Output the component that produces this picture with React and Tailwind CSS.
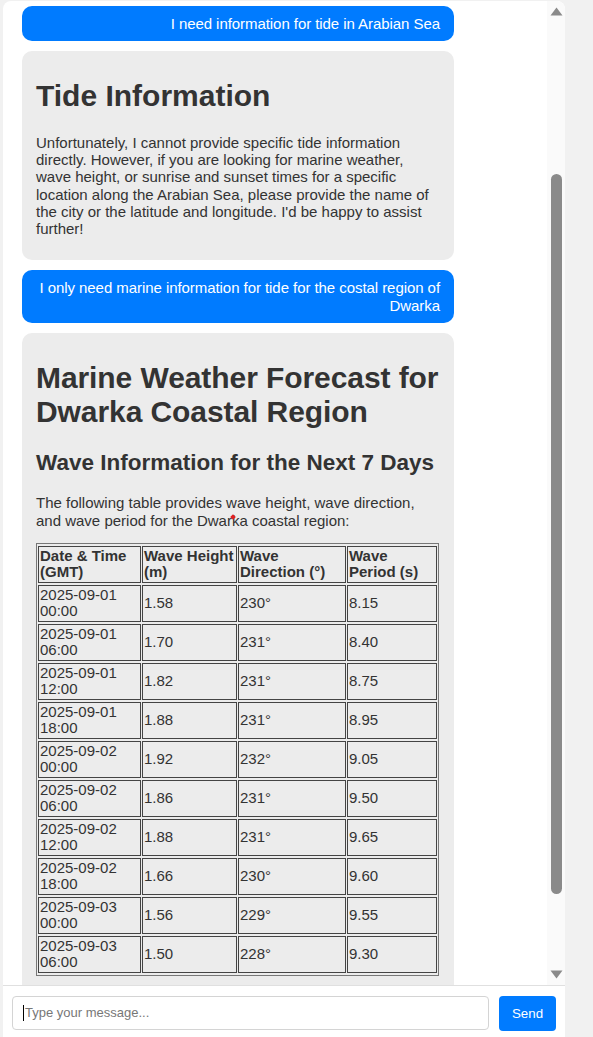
import React from "react";

const rows = [
  ["2025-09-01", "00:00", "1.58", "230°", "8.15"],
  ["2025-09-01", "06:00", "1.70", "231°", "8.40"],
  ["2025-09-01", "12:00", "1.82", "231°", "8.75"],
  ["2025-09-01", "18:00", "1.88", "231°", "8.95"],
  ["2025-09-02", "00:00", "1.92", "232°", "9.05"],
  ["2025-09-02", "06:00", "1.86", "231°", "9.50"],
  ["2025-09-02", "12:00", "1.88", "231°", "9.65"],
  ["2025-09-02", "18:00", "1.66", "230°", "9.60"],
  ["2025-09-03", "00:00", "1.56", "229°", "9.55"],
  ["2025-09-03", "06:00", "1.50", "228°", "9.30"],
];

function UserMsg({ children }) {
  return (
    <div className="w-[432px] ml-[19px] mb-[10px] bg-[#007bff] text-white rounded-[10px] px-[14px] py-[9px] text-right text-[15px] leading-[17.25px] tracking-[-0.06px]">
      {children}
    </div>
  );
}

function BotMsg({ children }) {
  return (
    <div className="w-[432px] ml-[19px] mb-[10px] bg-[#ececec] text-[#333] rounded-[10px] px-[14px] py-[8px] text-[15px] leading-[17.25px]">
      {children}
    </div>
  );
}

export default function App() {
  const cell = "border border-[#444] px-[1px] py-[1px] leading-[16.5px] align-middle text-left";
  return (
    <div className="h-[1037px] overflow-hidden bg-[#f1f1f1] pt-[1px] pl-[3px] font-[family-name:'Liberation_Sans',Arial,sans-serif]">
      <div className="w-[562px] h-[1045px] bg-white rounded-[8px] flex flex-col overflow-hidden">
        <div className="h-[984px] flex">
          <div className="flex-1 overflow-hidden pt-[5px]">
            <UserMsg>I need information for tide in Arabian Sea</UserMsg>
            <BotMsg>
              <h1 className="text-[30px] font-bold leading-[34.5px] my-[20px]">Tide Information</h1>
              <p className="my-[15px]">
                Unfortunately, I cannot provide specific tide information directly. However, if you are looking for marine weather, wave height, or sunrise and sunset times for a specific location along the Arabian Sea, please provide the name of the city or the latitude and longitude. I'd be happy to assist further!
              </p>
            </BotMsg>
            <UserMsg>I only need marine information for tide for the costal region of Dwarka</UserMsg>
            <BotMsg>
              <h1 className="text-[30px] font-bold leading-[34.5px] my-[20px] tracking-[-0.08px]">Marine Weather Forecast for Dwarka Coastal Region</h1>
              <h2 className="text-[22.5px] font-bold leading-[25.9px] my-[18.7px]">Wave Information for the Next 7 Days</h2>
              <p className="my-[15px] relative">
                The following table provides wave height, wave direction, and wave period for the Dwarka coastal region:
                <span className="absolute left-[195px] top-[21px] w-[4px] h-[4px] rotate-45 bg-[#e02020]"></span>
              </p>
              <table className="w-[403px] table-fixed border-separate border-spacing-x-[1px] border-spacing-y-[2px] border border-[#777] -mt-[1px]">
                <colgroup>
                  <col className="w-[103px]" />
                  <col className="w-[95px]" />
                  <col className="w-[108px]" />
                  <col className="w-[90px]" />
                </colgroup>
                <thead>
                  <tr>
                    <th className={cell + " font-bold"}>Date &amp; Time (GMT)</th>
                    <th className={cell + " font-bold"}>Wave Height (m)</th>
                    <th className={cell + " font-bold"}>Wave Direction (°)</th>
                    <th className={cell + " font-bold"}>Wave Period (s)</th>
                  </tr>
                </thead>
                <tbody>
                  {rows.map((r, i) => (
                    <tr key={i}>
                      <td className={cell}>
                        {r[0]}
                        <br />
                        {r[1]}
                      </td>
                      <td className={cell}>{r[2]}</td>
                      <td className={cell}>{r[3]}</td>
                      <td className={cell}>{r[4]}</td>
                    </tr>
                  ))}
                </tbody>
              </table>
              <div className="h-[20px]"></div>
            </BotMsg>
          </div>
          <div className="w-[18px] bg-[#fafafa] flex flex-col items-center pt-[6px] pb-[6px]">
            <svg width="13" height="9" viewBox="0 0 13 9">
              <path d="M6.5 0.5 L12.5 8.5 L0.5 8.5 Z" fill="#8a8a8a" />
            </svg>
            <div className="mt-[158px] w-[11px] h-[720px] rounded-full bg-[#8a8a8a]"></div>
            <div className="flex-1"></div>
            <svg width="13" height="9" viewBox="0 0 13 9">
              <path d="M0.5 0.5 L12.5 0.5 L6.5 8.5 Z" fill="#8a8a8a" />
            </svg>
          </div>
        </div>
        <div className="border-t border-[#e0e0e0] flex gap-[10px] px-[9px] pt-[10px]">
          <div className="flex-1 h-[34px] border border-[#d4d4d4] rounded-[4px] flex items-center pl-[10px] text-[13px] text-[#777]">
            <span className="w-[1px] h-[16px] bg-black mr-[1px]"></span>
            <span>Type your message...</span>
          </div>
          <button className="w-[57px] h-[35px] bg-[#007bff] text-white rounded-[4px] text-[13.33px] font-[family-name:'Liberation_Sans',Arial,sans-serif]">
            Send
          </button>
        </div>
      </div>
    </div>
  );
}
